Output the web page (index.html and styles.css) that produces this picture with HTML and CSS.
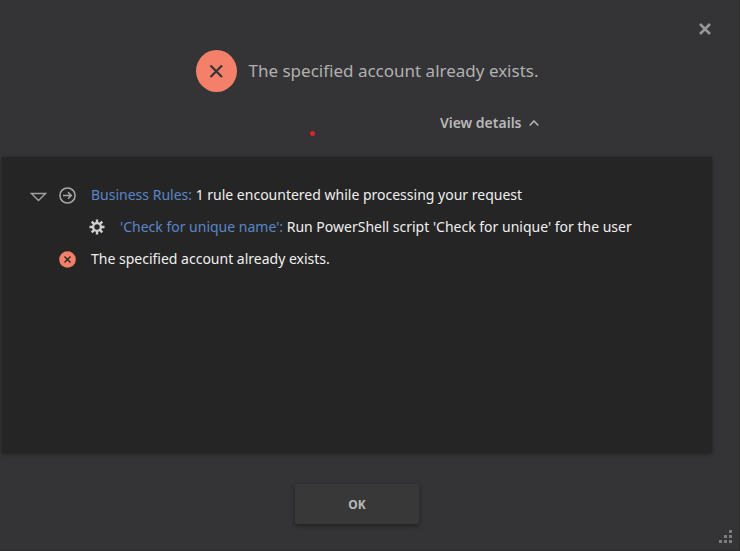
FILE: index.html
```html
<!DOCTYPE html>
<html lang="en">
<head>
    <meta charset="UTF-8">
    <meta name="viewport" content="width=device-width, initial-scale=1.0">
    <title>Operation result</title>
    <link rel="stylesheet" href="styles.css">
</head>
<body>
    <div class="dialog" role="dialog" aria-labelledby="message">
        <div class="title-bar">
            <button class="close-btn" type="button" aria-label="Close">
                <svg width="12" height="12" viewBox="0 0 12 12"><path d="M1 1 L11 11 M11 1 L1 11"/></svg>
            </button>
        </div>

        <div class="summary">
            <div class="summary-content">
                <div class="message">
                    <svg class="error-icon" width="41" height="42" viewBox="0 0 41 42">
                        <ellipse cx="20.5" cy="21" rx="20.5" ry="21"/>
                        <path d="M14.5 15.5 L26 27 M26 15.5 L14.5 27"/>
                    </svg>
                    <h1 id="message">The specified account already exists.</h1>
                </div>
                <button class="details-btn" type="button" aria-expanded="true" aria-controls="details">
                    View details
                    <svg width="10" height="6" viewBox="0 0 10 6"><path d="M0.7 5.4 L5 1 L9.3 5.4"/></svg>
                </button>
                <span class="red-dot"></span>
            </div>
        </div>

        <div class="details" id="details">
            <ul class="log">
                <li class="log-row">
                    <button class="toggle-btn" type="button" aria-label="Collapse">
                        <svg width="17" height="14" viewBox="0 0 17 14"><path d="M1.5 5.5 H15.5 L8.5 12.5 Z"/></svg>
                    </button>
                    <svg class="arrow-icon" width="17" height="17" viewBox="0 0 17 17">
                        <circle cx="8.5" cy="8.5" r="7.6"/>
                        <path d="M4 8.5 H12.3 M9 5.2 L12.3 8.5 L9 11.8"/>
                    </svg>
                    <span><a href="#">Business Rules:</a> 1 rule encountered while processing your request</span>
                </li>
                <li class="log-row nested">
                    <svg class="gear-icon" width="16" height="16" viewBox="0 0 16 16">
                        <circle cx="8" cy="8" r="3.9"/>
                        <path d="M8 0.5 V4 M8 12 V15.5 M0.5 8 H4 M12 8 H15.5 M2.7 2.7 L5.2 5.2 M10.8 10.8 L13.3 13.3 M13.3 2.7 L10.8 5.2 M5.2 10.8 L2.7 13.3"/>
                    </svg>
                    <span><a href="#">'Check for unique name':</a> Run PowerShell script 'Check for unique' for the user</span>
                </li>
                <li class="log-row leaf">
                    <svg class="error-icon small" width="17" height="17" viewBox="0 0 17 17">
                        <circle cx="8.5" cy="8.5" r="8.3"/>
                        <path d="M5.5 5.5 L11.5 11.5 M11.5 5.5 L5.5 11.5"/>
                    </svg>
                    <span>The specified account already exists.</span>
                </li>
            </ul>
        </div>

        <div class="footer">
            <button class="ok-btn" type="button">OK</button>
        </div>

        <svg class="resize-grip" width="13" height="13" viewBox="0 0 13 13">
            <path d="M10 0h3v3h-3z M5 5h3v3h-3z M10 5h3v3h-3z M0 10h3v3h-3z M5 10h3v3h-3z M10 10h3v3h-3z"/>
        </svg>
    </div>
</body>
</html>
```
FILE: styles.css
```css
* {
    box-sizing: border-box;
}

body {
    margin: 0;
    background: #343436;
    color: #f0f0f0;
    font-family: "Segoe UI", "Noto Sans", "Open Sans", sans-serif;
    font-size: 14px;
    line-height: 20px;
}

button {
    padding: 0;
    border: none;
    background: none;
    color: #b8b8b8;
    font: inherit;
    cursor: pointer;
}

svg {
    display: block;
    flex: none;
    fill: none;
}

.dialog {
    position: relative;
    display: flex;
    flex-direction: column;
    min-height: 100vh;
    border-right: 1px solid #2b2b2c;
    border-bottom: 1px solid #2b2b2c;
}

.title-bar {
    display: flex;
    justify-content: flex-end;
    height: 50px;
    padding: 23px 28px 0 0;
}

.close-btn {
    height: 12px;
}

.close-btn svg {
    stroke: #979797;
    stroke-width: 2.5;
}

.summary {
    display: flex;
    justify-content: center;
    padding-right: 5px;
}

.summary-content {
    position: relative;
    display: flex;
    flex-direction: column;
    align-items: flex-end;
    gap: 21px;
}

.message {
    display: flex;
    align-items: center;
    gap: 12px;
}

.message h1 {
    margin: 0;
    color: #b0b0b0;
    font-size: 17px;
    font-weight: 400;
    line-height: 24px;
}

.error-icon {
    fill: #f4806a;
    stroke: #343436;
    stroke-width: 2.2;
}

.error-icon ellipse,
.error-icon circle {
    stroke: none;
}

.error-icon.small {
    stroke: #252525;
    stroke-width: 1.4;
}

.details-btn {
    display: flex;
    align-items: center;
    gap: 7px;
    font-weight: 600;
}

.details-btn svg {
    stroke: #b8b8b8;
    stroke-width: 1.5;
}

/* recording pointer over the message */
.red-dot {
    position: absolute;
    left: 114px;
    bottom: -3px;
    width: 5px;
    height: 5px;
    border-radius: 50%;
    background: #d9232b;
}

.details {
    flex: 1;
    margin: 24px 27px 0 2px;
    padding: 28px;
    background: #252525;
    box-shadow: 0 1px 4px rgba(0, 0, 0, 0.4);
}

.log {
    display: flex;
    flex-direction: column;
    gap: 12px;
    margin: 0;
    padding: 0;
    list-style: none;
}

.log-row {
    display: flex;
    align-items: center;
}

.log-row > span {
    margin-left: 15px;
}

.log-row.leaf {
    padding-left: 29px;
}

.log-row.nested {
    padding-left: 59px;
}

.log a {
    color: #5a86c9;
    text-decoration: none;
}

.toggle-btn {
    margin-right: 12px;
}

.toggle-btn svg {
    stroke: #a0a0a0;
    stroke-width: 1.4;
}

.arrow-icon {
    stroke: #a8a8a8;
    stroke-width: 1.5;
}

.gear-icon {
    stroke: #d0d0d0;
    stroke-width: 2.4;
}

.footer {
    display: flex;
    justify-content: center;
    padding: 31px 27px 26px 2px;
}

.ok-btn {
    width: 124px;
    height: 40px;
    padding-top: 2px;
    border-radius: 2px;
    background: #383838;
    box-shadow: 0 2px 5px rgba(0, 0, 0, 0.4);
    font-size: 12px;
    font-weight: 700;
}

.resize-grip {
    position: absolute;
    right: 7px;
    bottom: 7px;
    fill: #7c7c7c;
}
```
